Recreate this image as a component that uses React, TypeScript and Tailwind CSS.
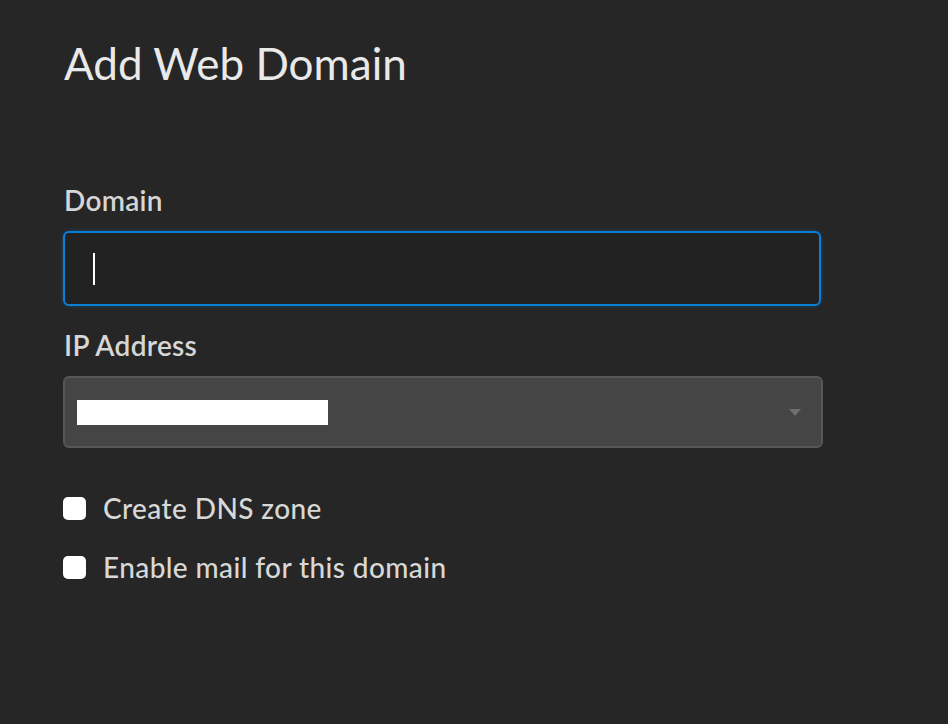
export default function App() {
  return (
    <div className="min-h-[724px] w-full bg-[#262626] font-['Lato',sans-serif]">
      <div className="w-[760px] pl-[63px] pt-[35px]">
        {/* Header */}
        <h1 className="text-[44px] leading-[56px] font-normal text-[#e9e9e9] pl-px">
          Add Web Domain
        </h1>

        {/* Domain */}
        <div className="mt-[92px]">
          <label className="block pl-px text-[28px] leading-[34px] font-semibold tracking-[0.3px] text-[#d6d6d6]">
            Domain
          </label>
          <div className="mt-[14px] flex h-[75px] w-[758px] items-center rounded-[6px] border-2 border-[#0a7fd8] bg-[#222222] pl-[28px] shadow-[0_0_4px_rgba(10,127,216,0.35)]">
            <span className="h-[32px] w-[2px] bg-white" />
          </div>
        </div>

        {/* IP Address */}
        <div className="mt-[22px]">
          <label className="block pl-px text-[28px] leading-[34px] font-semibold tracking-[0.3px] text-[#d6d6d6]">
            IP Address
          </label>
          <div className="mt-[14px] flex h-[72px] w-[760px] items-center justify-between rounded-[6px] border-2 border-[#575757] bg-[#454545] pl-[12px] pr-[20px]">
            <span className="h-[25px] w-[251px] bg-white" />
            <svg width="12" height="7" viewBox="0 0 12 7">
              <path d="M0 0 L12 0 L6 7 Z" fill="#6f6f6f" />
            </svg>
          </div>
        </div>

        {/* Options */}
        <div className="mt-[48px] flex flex-col gap-[35px]">
          <label className="flex items-center gap-[17px]">
            <span className="h-[23px] w-[23px] rounded-[5px] bg-white" />
            <span className="text-[28px] leading-[24px] font-medium tracking-[0.4px] text-[#d8d8d8]">
              Create DNS zone
            </span>
          </label>
          <label className="flex items-center gap-[17px]">
            <span className="h-[23px] w-[23px] rounded-[5px] bg-white" />
            <span className="text-[28px] leading-[24px] font-medium tracking-[0.4px] text-[#d8d8d8]">
              Enable mail for this domain
            </span>
          </label>
        </div>
      </div>
    </div>
  );
}
